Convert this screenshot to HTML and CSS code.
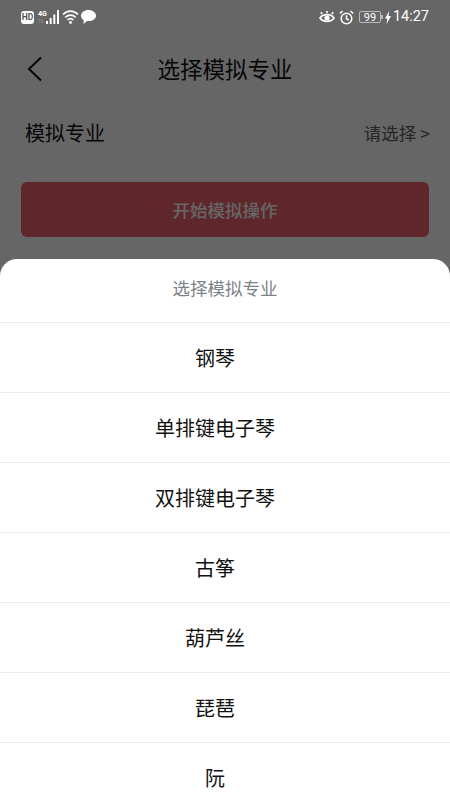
FILE: index.html
```html
<!DOCTYPE html>
<html lang="zh">
<head>
<meta charset="utf-8">
<title>选择模拟专业</title>
<link rel="stylesheet" href="styles.css">
</head>
<body>
<div class="page">
  <div class="status">
    <div class="status-left">
      <span class="hd">HD</span>
      <span class="net"><span class="net-text">4G<span class="net-sub">16</span></span>
        <svg class="bars" width="13" height="14" viewBox="0 0 13 14"><path d="M0 14v-3h2v3zM3.700 14V8h2v6zM7.300 14V4.500h2V14zM11 14V0h2v14z" fill="#fff"/></svg>
      </span>
      <svg class="wifi" width="17" height="14" viewBox="0 0 17 14" fill="none" stroke="#fff" stroke-width="1.700"><path d="M1 4.500c4.500-4.500 10.500-4.500 15 0M3.300 7.300c3-3 7.400-3 10.400 0M5.600 10c1.700-1.600 4.100-1.600 5.800 0"/><circle cx="8.500" cy="12.500" r="1.400" fill="#fff" stroke="none"/></svg>
      <svg class="chat" width="15" height="14" viewBox="0 0 15 14"><path d="M7.500 0C3.400 0 0 2.500 0 5.700c0 1.900 1.100 3.500 2.800 4.500L2.400 14l3.800-2.900.1-.1h1.200C11.600 11 15 8.800 15 5.700S11.600 0 7.500 0z" fill="#fff"/></svg>
    </div>
    <div class="status-right">
      <svg width="16" height="14" viewBox="0 0 16 14" fill="none" stroke="#fff" stroke-width="1.600"><path d="M1 8c3-4.500 11-4.500 14 0-3 4.500-11 4.500-14 0z"/><circle cx="8" cy="8" r="2.600" fill="#fff" stroke="none"/><path d="M3.200 4 1.800 2.300M8 3V1M12.800 4l1.400-1.700"/></svg>
      <svg width="15" height="15" viewBox="0 0 15 15" fill="none" stroke="#fff" stroke-width="1.500"><circle cx="7.500" cy="8.500" r="5.300"/><path d="M7.500 5.200v3.500l2.200 1.300M.8 3.500 3.500 1M14.200 3.500 11.500 1"/></svg>
      <span class="battery"><span class="battery-num">99</span></span>
      <svg class="bolt" width="6" height="13" viewBox="0 0 6 13"><path d="M4.200 0 0 7.500h2.300L1.600 13 6 5h-2.500z" fill="#fff"/></svg>
      <span class="time">14:27</span>
    </div>
  </div>
  <header class="nav">
    <svg class="back" width="16" height="26" viewBox="0 0 16 26" fill="none" stroke="#111" stroke-width="2"><path d="M14 1.500 2 13l12 11.500"/></svg>
    <h1 class="nav-title">选择模拟专业</h1>
  </header>
  <div class="field">
    <span class="field-label">模拟专业</span>
    <span class="field-value">请选择 &gt;</span>
  </div>
  <div class="start-wrap"><button class="start">开始模拟操作</button></div>
  <div class="mask"></div>
  <div class="sheet">
    <div class="sheet-title">选择模拟专业</div>
    <div class="item">钢琴</div>
    <div class="item">单排键电子琴</div>
    <div class="item">双排键电子琴</div>
    <div class="item">古筝</div>
    <div class="item">葫芦丝</div>
    <div class="item">琵琶</div>
    <div class="item">阮</div>
  </div>
</div>
</body>
</html>
```
FILE: styles.css
```css
* { box-sizing: border-box; }
html, body { margin: 0; padding: 0; }
body { font-family: "Noto Sans CJK SC", "Roboto", sans-serif; background: #fff; }
.page { position: relative; width: 450px; height: 800px; overflow: hidden; background: #fff; }
.status { position: relative; z-index: 2; height: 34px; display: flex; justify-content: space-between; align-items: center; padding: 0 21px; }
.status-left, .status-right { display: flex; align-items: center; }
.status-left { gap: 3px; }
.status-right { gap: 4px; }
.hd { width: 13px; height: 13px; border-radius: 3px; background: #fff; color: #555; font: 700 8.500px/13px "Roboto", sans-serif; text-align: center; }
.net { display: flex; align-items: flex-end; margin-left: 1px; }
.net-text { color: #fff; font: 700 7px/8px "Roboto", sans-serif; width: 8px; display: flex; flex-direction: column; }
.net-sub { font: 400 5px/6px "Roboto", sans-serif; color: #999; }
.chat { margin-left: -1px; }
.battery { position: relative; width: 22px; height: 12px; border: 1px solid #bbb; border-radius: 2px; color: #fff; display: flex; align-items: center; justify-content: center; margin-left: 1px; }
.battery::after { content: ""; position: absolute; right: -3px; top: 3px; width: 2px; height: 4px; background: #bbb; }
.battery-num { font: 400 11px/11px "Roboto", sans-serif; }
.time { color: #fff; font: 400 14.500px/18px "Roboto", sans-serif; margin-left: -2px; }
.nav { height: 68px; display: flex; align-items: center; justify-content: center; position: relative; }
.back { position: absolute; left: 27px; top: 22px; }
.nav-title { margin: 0; font-size: 22.500px; font-weight: 400; color: #111; }
.field { height: 60px; display: flex; justify-content: space-between; align-items: center; padding: 0 20px 0 25px; }
.field-label { font-size: 20px; color: #111; }
.field-value { font-size: 17.500px; color: #606060; }
.start-wrap { padding: 20px 21px 0; }
.start { display: block; width: 100%; height: 55px; border: 0; border-radius: 6px; background: #ee626e; color: #fff; font: 500 17.500px "Noto Sans CJK SC", sans-serif; }
.mask { position: absolute; inset: 0; background: rgba(0, 0, 0, .6); }
.sheet { position: absolute; left: 0; right: 0; top: 259px; background: #fff; border-radius: 17px 17px 0 0; }
.sheet-title { height: 64px; display: flex; align-items: center; justify-content: center; font-size: 17.500px; color: #7c8288; border-bottom: 1px solid #eee; padding-bottom: 6px; }
.item { height: 70px; display: flex; align-items: center; justify-content: center; font-size: 20px; color: #111; border-bottom: 1px solid #eee; padding-right: 20px; }
```
